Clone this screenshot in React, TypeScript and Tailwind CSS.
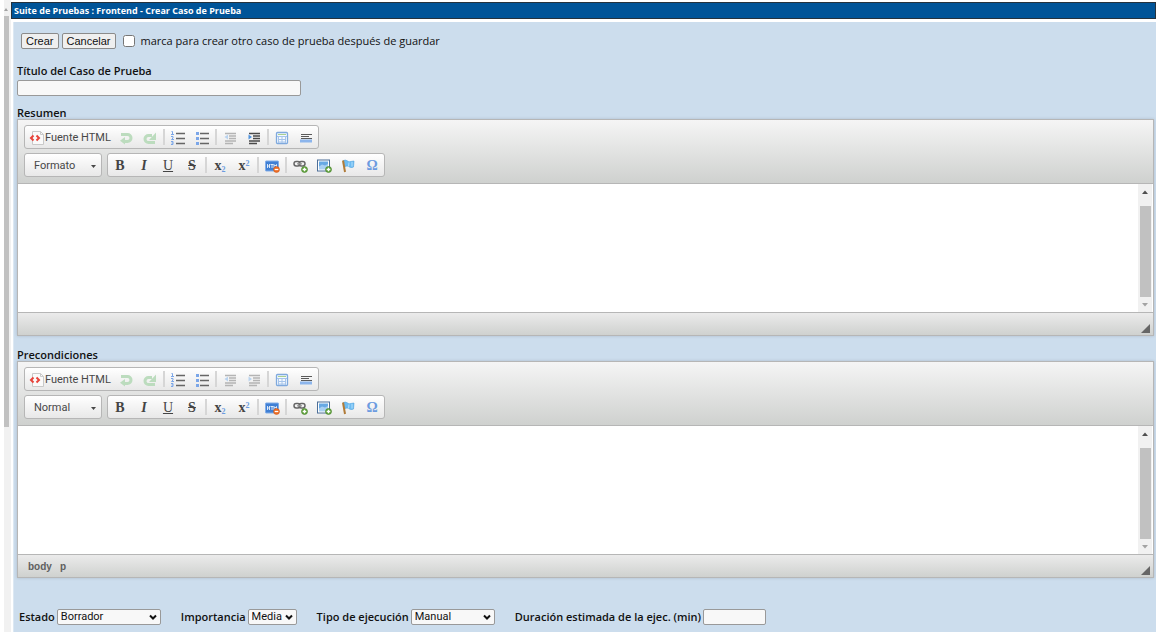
import { useId, type ReactNode } from "react"

function Icon({ children }: { children: ReactNode }) {
  return (
    <svg viewBox="0 0 16 16" className="h-4 w-4 shrink-0" aria-hidden="true">
      {children}
    </svg>
  )
}

function SourceIcon() {
  return (
    <Icon>
      <path d="M3.5 1.5h8l3 3v10h-11z" fill="#fafafa" stroke="#c9c9c9" />
      <path d="M11.5 1.5v3h3" fill="none" stroke="#c9c9c9" />
      <path d="M4.5 5.5L2 8l2.500 2.500M7.500 5.500L10 8l-2.500 2.500" fill="none" stroke="#e8433a" strokeWidth="2" />
    </Icon>
  )
}

function UndoIcon() {
  return (
    <Icon>
      <path d="M3 4.500h6.500a3.500 3.500 0 0 1 0 7H6" fill="none" stroke="#bcdcbe" strokeWidth="3" />
      <path d="M7 7v7.500L2 10.800z" fill="#bcdcbe" />
    </Icon>
  )
}

function RedoIcon() {
  return (
    <Icon>
      <path d="M13 12.500H6.500a3.500 3.500 0 0 1 0-7H10" fill="none" stroke="#bcdcbe" strokeWidth="3" />
      <path d="M14 2.500V10H7z" fill="#bcdcbe" />
    </Icon>
  )
}

function NumberedListIcon() {
  return (
    <Icon>
      <path d="M6 3.500h9M6 8.500h9M6 13.500h9" stroke="#666" strokeWidth="1.400" />
      <path
        d="M1.500 1.500h1v3M1 4.500h3M1 6.500h2v1.500L1.500 9.500H4M1 11.500h2v3H1M1.500 13h1.500"
        fill="none"
        stroke="#7ba6e8"
      />
    </Icon>
  )
}

function BulletedListIcon() {
  return (
    <Icon>
      <path d="M6 3.500h9M6 8.500h9M6 13.500h9" stroke="#666" strokeWidth="1.400" />
      <path d="M2 2h3v3H2zM2 7h3v3H2zM2 12h3v3H2z" fill="#7ba6e8" />
    </Icon>
  )
}

function OutdentIcon() {
  return (
    <Icon>
      <path d="M3 3.500h11M7 6h7M7 8.500h7M3 11h11M3 13.500h8" stroke="#b4b4b4" strokeWidth="1.500" />
      <path d="M6 4.500v5L2.500 7z" fill="#b9d3ef" />
    </Icon>
  )
}

function IndentIcon({ disabled }: { disabled: boolean }) {
  return (
    <Icon>
      <path
        d="M3 3.500h11M7 6h7M7 8.500h7M3 11h11M3 13.500h8"
        stroke={disabled ? "#b4b4b4" : "#4a4a4a"}
        strokeWidth="1.500"
      />
      <path d="M2.500 4.500v5L6 7z" fill={disabled ? "#b9d3ef" : "#4f92dc"} />
    </Icon>
  )
}

function TableIcon() {
  return (
    <Icon>
      <rect x="2.500" y="2.500" width="11" height="11" rx="1" fill="#f4f9ff" stroke="#7fa9dd" strokeWidth="1.300" />
      <path d="M4 4.500h8" stroke="#a9d18f" />
      <path d="M3 6.500h10M4 9.500h8M4 12h8M4.500 6v7M8 6v7M11.500 6v7" stroke="#a6c4ea" />
    </Icon>
  )
}

function BlockIcon() {
  return (
    <Icon>
      <rect x="2" y="9.500" width="12" height="3" fill="#8cb5ec" />
      <path d="M3 4.500h11M3 6.500h8M3 8.500h11" stroke="#5a5a5a" strokeWidth="1.200" />
    </Icon>
  )
}

function HtmlBlockIcon() {
  return (
    <Icon>
      <rect x="1.500" y="3" width="13" height="10" rx=".5" fill="#3f7fd4" stroke="#82aee9" />
      <path
        d="M3.500 6v4M5.500 6v4M3.500 8h2M6.500 6.500h3M8 6.500V10M10 10V6.500l1.200 1.500L12.500 6.500V10"
        fill="none"
        stroke="#fff"
        strokeWidth=".8"
      />
      <circle cx="12.500" cy="11.500" r="3" fill="#ee6c22" stroke="#c9541a" strokeWidth=".5" />
      <path d="M10.700 11.500h3.600" stroke="#fff" strokeWidth="1.300" />
    </Icon>
  )
}

function AddBadge() {
  return (
    <>
      <circle cx="12.500" cy="11.500" r="3" fill="#5fa23a" stroke="#458225" strokeWidth=".6" />
      <path d="M10.700 11.500h3.600M12.500 9.700v3.600" stroke="#fff" strokeWidth="1.300" />
    </>
  )
}

function LinkIcon() {
  return (
    <Icon>
      <rect x="2" y="3.500" width="6" height="4.500" rx="2.200" fill="none" stroke="#666" strokeWidth="1.500" />
      <rect x="7" y="3.500" width="6" height="4.500" rx="2.200" fill="none" stroke="#666" strokeWidth="1.500" />
      <path d="M5 5.800h5" stroke="#999" strokeWidth="1.300" />
      <AddBadge />
    </Icon>
  )
}

function ImageIcon() {
  return (
    <Icon>
      <rect x="1.500" y="2" width="12" height="11" fill="#fff" stroke="#4d6f98" />
      <rect x="3" y="3.500" width="9" height="6" fill="#67a9e4" />
      <path d="M3 8.500l3-2 3 1 3-1.500v5.500H3z" fill="#a9d0f2" />
      <AddBadge />
    </Icon>
  )
}

function FlagIcon() {
  return (
    <Icon>
      <path
        d="M3.500 2.500c3-1.500 4 1.500 6 1.200L14 3l-.5 6c-2 1-3.500.5-4.500-.3-1.500-1-2.500-.7-4-.2z"
        fill="#6dbcf2"
        stroke="#4fa3df"
        strokeWidth=".6"
      />
      <path d="M9 4.500l-.5 4M12 4v4.500" stroke="#b5e0fc" />
      <path d="M3 2.500L5 14" stroke="#b07b38" strokeWidth="2" />
    </Icon>
  )
}

function Tool({ label, disabled, children }: { label: string; disabled?: boolean; children: ReactNode }) {
  return (
    <button
      type="button"
      aria-label={label}
      disabled={disabled}
      className="flex h-[22px] w-6 items-center justify-center pt-0.5 font-['Liberation_Serif',serif] text-sm leading-4 text-[#444]"
    >
      {children}
    </button>
  )
}

function Separator() {
  return <span className="mx-px h-4 w-0.5 bg-[#d6d6d6]" />
}

function ToolGroup({ children }: { children: ReactNode }) {
  return (
    <div className="flex w-fit items-center rounded-[3px] border border-[#b6b6b6] bg-linear-to-b from-white to-[#e8e8e8]">
      {children}
    </div>
  )
}

function ScrollBar() {
  return (
    <div className="flex w-3.5 flex-col items-center bg-[#f1f1f1]">
      <svg viewBox="0 0 14 22" className="h-[22px] w-3.5" aria-hidden="true">
        <path d="M4 10l3-3.500 3 3.500z" fill="#505050" />
      </svg>
      <div className="w-[11px] flex-1 bg-[#c1c1c1]" />
      <svg viewBox="0 0 14 15" className="h-[15px] w-3.5" aria-hidden="true">
        <path d="M4 6l3 3.500L10 6z" fill="#a3a3a3" />
      </svg>
    </div>
  )
}

type EditorProps = {
  label: string
  format: string
  path: string[]
  canIndent: boolean
}

function RichTextEditor({ label, format, path, canIndent }: EditorProps) {
  const id = useId()

  return (
    <section>
      <label htmlFor={id} className="block leading-3 font-semibold">
        {label}
      </label>
      <div className="border border-[#b6b6b6] font-['Liberation_Sans',sans-serif] shadow-[0_0_3px_rgba(0,0,0,0.15)]">
        <div className="flex flex-col gap-1 border-b border-[#b6b6b6] bg-linear-to-b from-[#f5f5f5] to-[#cfd1cf] px-1.5 pt-[5px] pb-1.5">
          <ToolGroup>
            <button
              type="button"
              className="flex h-[22px] w-[89px] items-center pt-0.5 pl-1 font-['Roboto',sans-serif] text-[11px] text-[#474747]"
            >
              <SourceIcon />
              <span className="whitespace-nowrap">Fuente HTML</span>
            </button>
            <Tool label="Deshacer" disabled><UndoIcon /></Tool>
            <Tool label="Rehacer" disabled><RedoIcon /></Tool>
            <Separator />
            <Tool label="Lista numerada"><NumberedListIcon /></Tool>
            <Tool label="Lista con viñetas"><BulletedListIcon /></Tool>
            <Separator />
            <Tool label="Disminuir sangría" disabled><OutdentIcon /></Tool>
            <Tool label="Aumentar sangría" disabled={!canIndent}><IndentIcon disabled={!canIndent} /></Tool>
            <Separator />
            <Tool label="Tabla"><TableIcon /></Tool>
            <Tool label="Línea horizontal"><BlockIcon /></Tool>
          </ToolGroup>
          <div className="flex gap-[5px]">
            <ToolGroup>
              <button
                type="button"
                className="flex h-[22px] w-[76px] items-center justify-between pt-0.5 pr-[5px] pl-[9px] font-['Roboto',sans-serif] text-[11px] text-[#474747]"
              >
                {format}
                <svg viewBox="0 0 5 3" className="h-[3px] w-[5px]" aria-hidden="true">
                  <path d="M0 0h5L2.500 3z" fill="#474747" />
                </svg>
              </button>
            </ToolGroup>
            <ToolGroup>
              <Tool label="Negrita"><b>B</b></Tool>
              <Tool label="Cursiva"><b className="italic">I</b></Tool>
              <Tool label="Subrayado"><span className="underline">U</span></Tool>
              <Tool label="Tachado"><b className="line-through">S</b></Tool>
              <Separator />
              <Tool label="Subíndice">
                <b>x</b>
                <b className="self-end text-[8px] leading-3 text-[#6c9be0]">2</b>
              </Tool>
              <Tool label="Superíndice">
                <b>x</b>
                <b className="self-start text-[8px] text-[#6c9be0]">2</b>
              </Tool>
              <Separator />
              <Tool label="Bloque HTML"><HtmlBlockIcon /></Tool>
              <Separator />
              <Tool label="Vínculo"><LinkIcon /></Tool>
              <Tool label="Imagen"><ImageIcon /></Tool>
              <Tool label="Ancla"><FlagIcon /></Tool>
              <Tool label="Carácter especial"><b className="text-[#6c9be0]">Ω</b></Tool>
            </ToolGroup>
          </div>
        </div>
        <div className="flex h-32 bg-white pr-px">
          <textarea id={id} className="flex-1 resize-none p-5 text-[13px] outline-none" />
          <ScrollBar />
        </div>
        <div className="flex h-[23px] items-center justify-between border-t border-[#b6b6b6] bg-linear-to-b from-[#ebebeb] to-[#cfd1cf] pr-[3px] pl-2.5 text-[10px] font-bold text-[#606060]">
          <div className="flex gap-2">
            {path.map((tag) => (
              <span key={tag}>{tag}</span>
            ))}
          </div>
          <svg viewBox="0 0 9 9" className="mb-0.5 h-[9px] w-[9px] self-end" aria-hidden="true">
            <path d="M9 0v9H0z" fill="#666" />
          </svg>
        </div>
      </div>
    </section>
  )
}

const fields = [
  { id: "status", label: "Estado", value: "Borrador", width: "w-[104px]" },
  { id: "importance", label: "Importancia", value: "Media", width: "w-[49px]" },
  { id: "execution", label: "Tipo de ejecución", value: "Manual", width: "w-[84px]" },
]

export default function App() {
  return (
    <div className="flex bg-white font-['Open_Sans',sans-serif] text-[11px] text-[#111]">
      <div className="ml-1 flex w-[7px] flex-col bg-[#f1f1f1]">
        <svg viewBox="0 0 7 16" className="h-4 w-[7px]" aria-hidden="true">
          <path d="M0 11l2-3 2 3z" fill="#a3a3a3" />
        </svg>
        <div className="h-[411px] w-[5px] bg-[#c1c1c1]" />
      </div>
      <main className="min-w-0 flex-1 pt-0.5">
        <h1 className="flex h-[17px] items-center border border-[#26323c] bg-[#005498] px-0.5 text-[9px] font-bold whitespace-nowrap text-white">
          Suite de Pruebas : Frontend - Crear Caso de Prueba
        </h1>
        <form className="mt-[3px] ml-0.5 border-l border-[#dce8f3] bg-[#ccdded] pt-[11px] pr-0.5 pb-[7px] pl-[3px]">
          <div className="flex items-center gap-[3px] pl-1">
            <button
              type="button"
              className="h-4 rounded-[2px] border border-[#8b8b8b] bg-[#efefef] px-1 font-['Liberation_Sans',sans-serif] text-[11px] leading-3"
            >
              Crear
            </button>
            <button
              type="button"
              className="h-4 rounded-[2px] border border-[#8b8b8b] bg-[#efefef] px-1 font-['Liberation_Sans',sans-serif] text-[11px] leading-3"
            >
              Cancelar
            </button>
            <label className="ml-1 flex items-center gap-1.5 leading-4">
              <input type="checkbox" className="h-3 w-3" />
              marca para crear otro caso de prueba después de guardar
            </label>
          </div>
          <label htmlFor="title" className="mt-4 block leading-3 font-semibold">
            Título del Caso de Prueba
          </label>
          <input id="title" type="text" className="mt-[3px] block h-4 w-[284px] rounded-[2px] border border-[#999] bg-[#f8f8f8] px-1" />
          <div className="mt-[11px] flex flex-col gap-[13px]">
            <RichTextEditor label="Resumen" format="Formato" path={[]} canIndent />
            <RichTextEditor label="Precondiciones" format="Normal" path={["body", "p"]} canIndent={false} />
          </div>
          <div className="mt-[31px] flex items-center gap-5 pl-0.5 whitespace-nowrap">
            {fields.map((field) => (
              <div key={field.id} className="flex items-center gap-0.5">
                <label htmlFor={field.id} className="leading-4 font-semibold">
                  {field.label}
                </label>
                <div className="relative flex">
                  <select
                    id={field.id}
                    className={`${field.width} h-4 appearance-none rounded-[2px] border border-[#999] bg-[#f8f8f8] pl-[3px] font-['Roboto',sans-serif] text-[11px] leading-3`}
                  >
                    <option>{field.value}</option>
                  </select>
                  <svg viewBox="0 0 8 6" className="pointer-events-none absolute top-[5px] right-1 h-1.5 w-2" aria-hidden="true">
                    <path d="M1 1.500l3 3 3-3" fill="none" stroke="#111" strokeWidth="2" />
                  </svg>
                </div>
              </div>
            ))}
            <div className="flex items-center gap-0.5">
              <label htmlFor="duration" className="leading-4 font-semibold">
                Duración estimada de la ejec. (min)
              </label>
              <input id="duration" type="text" className="h-4 w-[63px] rounded-[2px] border border-[#999] bg-[#f8f8f8] px-1" />
            </div>
          </div>
        </form>
      </main>
    </div>
  )
}
